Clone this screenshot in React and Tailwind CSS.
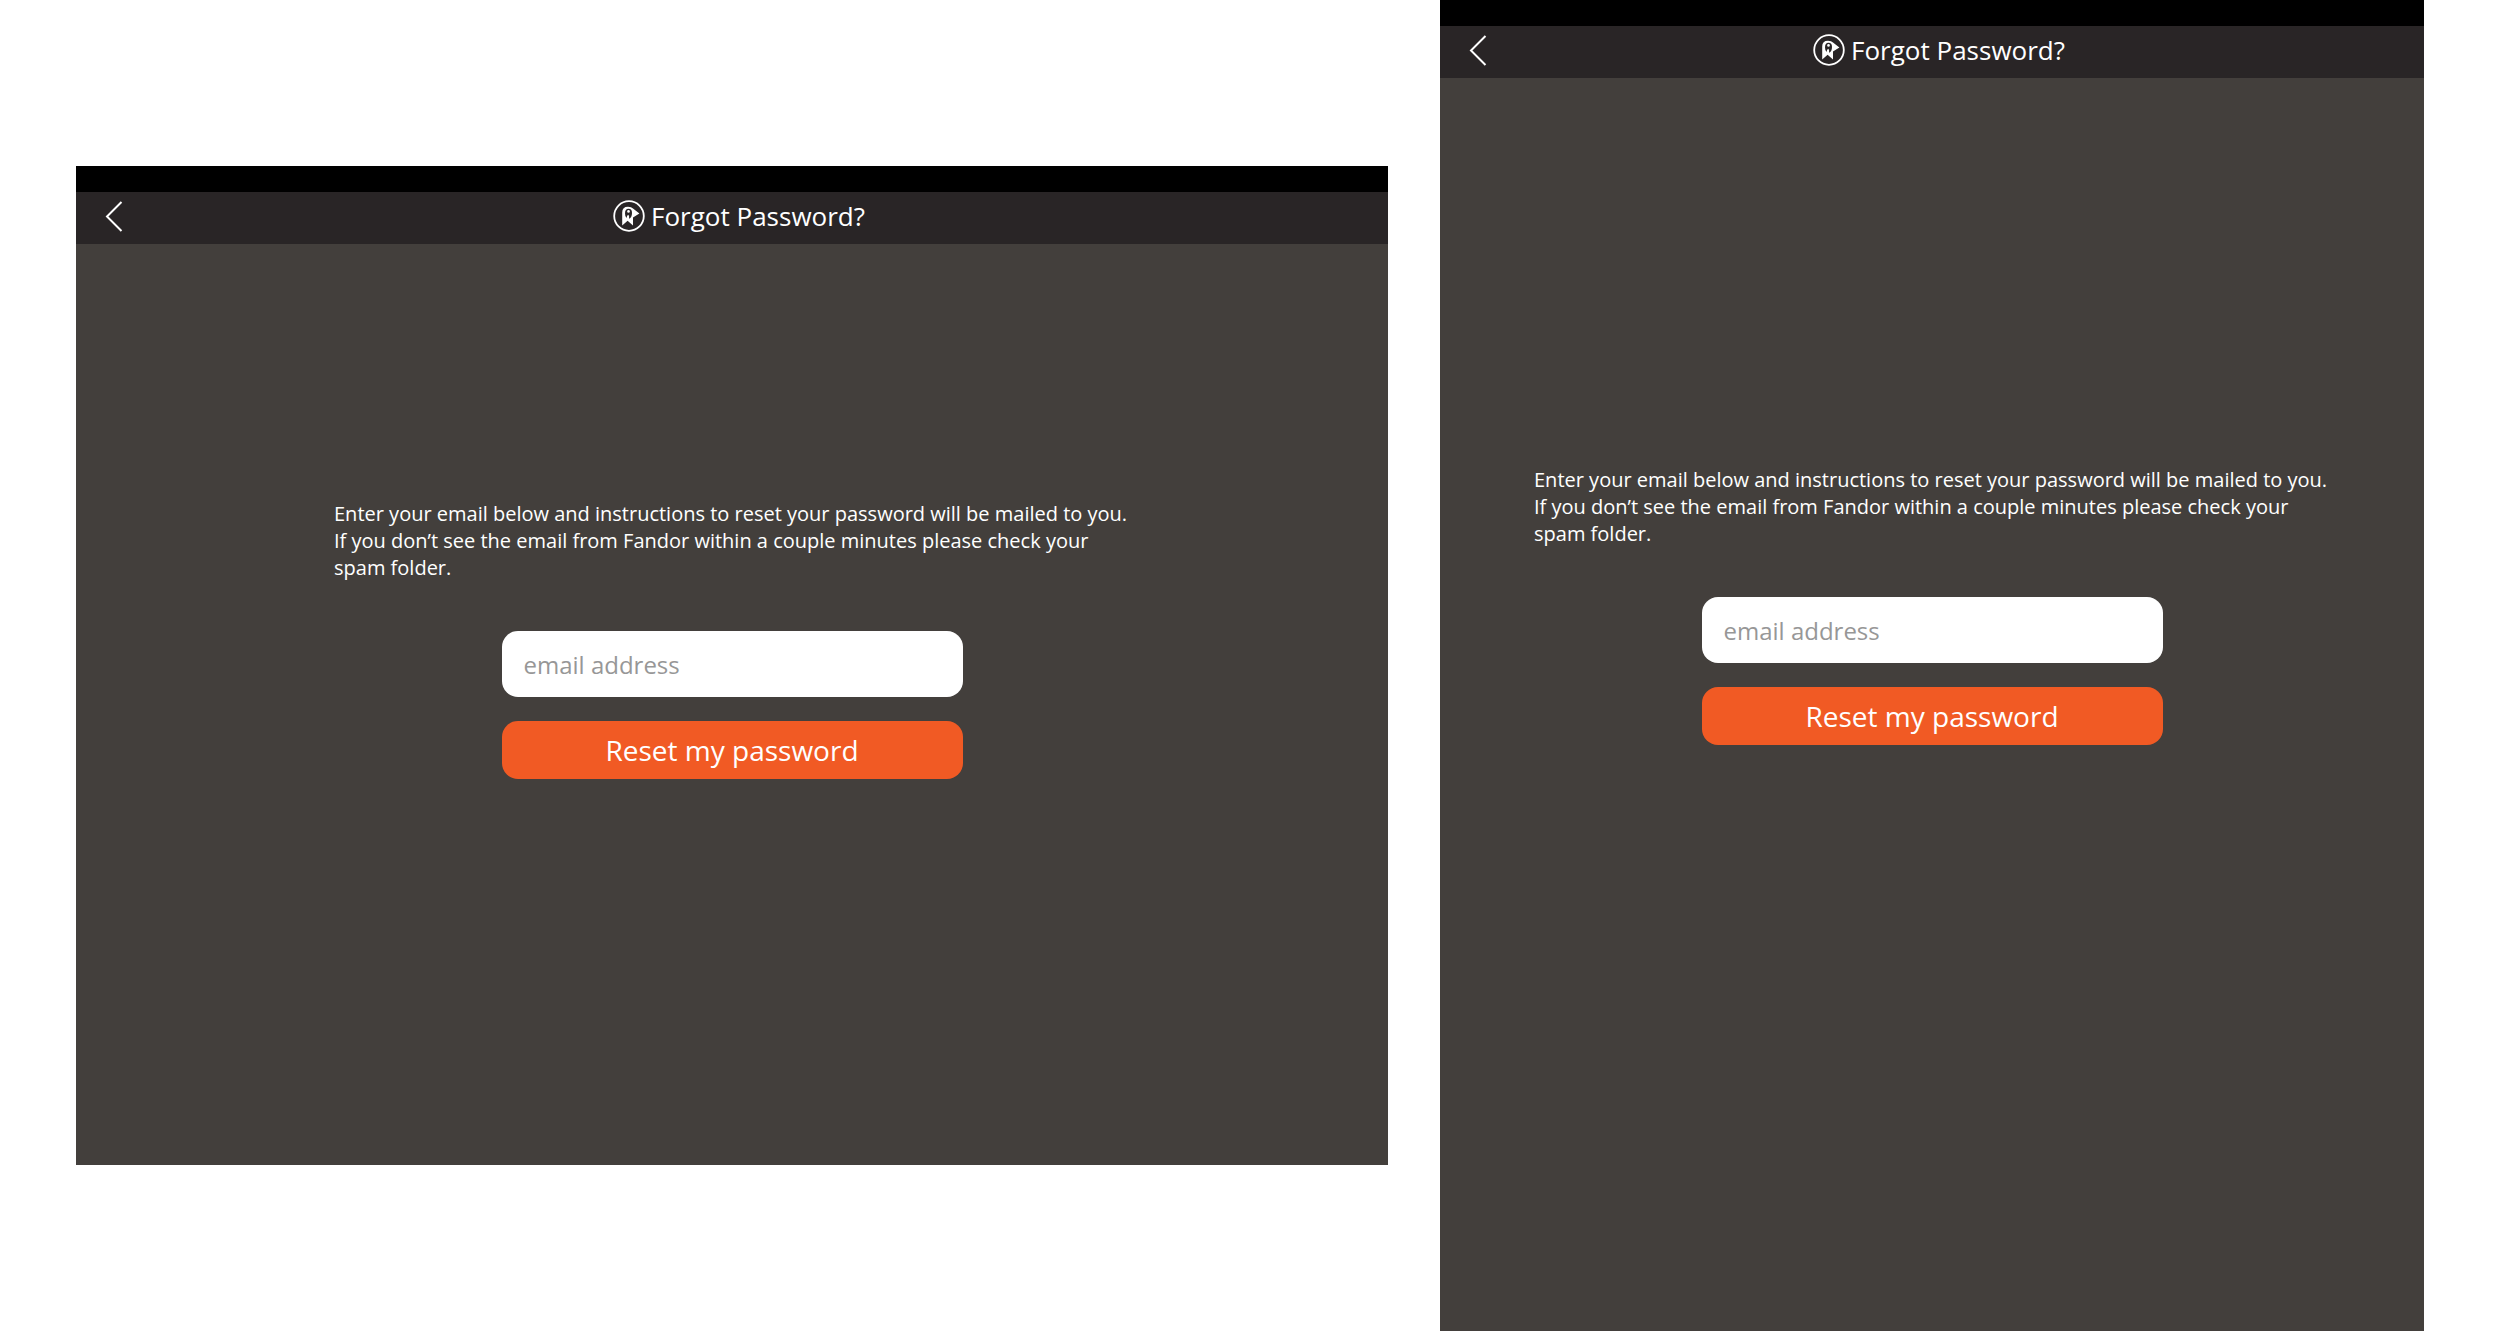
import React from 'react';

const FandorLogo = () => (
    <svg className="size-8 shrink-0" viewBox="0 0 32 32" fill="none" aria-hidden="true">
        <circle cx="16" cy="16" r="14.8" stroke="#fff" strokeWidth="1.8" />
        {/* ribbon head, beak and tails */}
        <path d="M9.2 25.5V12.6Q9.2 6.8 15 6.8Q18.5 6.8 20 8.4L26.4 13.6L20 17.6V25.5L14.6 20.8Z" fill="#fff" />
        <path d="M12 13.4Q12 8.8 15.5 8.8Q19 8.8 19 13Q19 17.4 16 18.8Q16.6 16.4 15.4 14.8Q13.8 15.4 13.6 18Q12 16.6 12 13.4Z" fill="#292526" />
        <circle cx="15.5" cy="11.4" r="1.3" fill="#fff" />
    </svg>
);

const NavBar = () => (
    <header>
        <div className="h-[26px] bg-black" />
        <div className="grid h-[52px] grid-cols-[1fr_auto_1fr] items-center bg-[#292526] pb-1 pl-[26px] pr-3">
            <button type="button" aria-label="Back" className="flex size-6 items-center justify-center">
                <svg className="h-8 w-5 shrink-0" viewBox="0 0 20 32" fill="none" aria-hidden="true">
                    <path d="M17.5 2L3 16.5L17.5 31" stroke="#fff" strokeWidth="2" />
                </svg>
            </button>
            <div className="flex items-center gap-1.5">
                <FandorLogo />
                <h1 className="text-[26px] leading-8 text-white">Forgot Password?</h1>
            </div>
        </div>
    </header>
);

const ResetForm = () => (
    <form className="mx-auto w-[796px] max-w-full" onSubmit={(e) => e.preventDefault()}>
        <p className="text-xl leading-[27px] text-white">
            Enter your email below and instructions to reset your password will be mailed to you.
            <br />
            If you don’t see the email from Fandor within a couple minutes please check your spam folder.
        </p>
        <div className="mx-auto mt-[50px] flex w-[461px] max-w-full flex-col gap-6">
            <input
                type="email"
                aria-label="email address"
                placeholder="email address"
                className="h-[66px] w-full rounded-2xl bg-white px-[22px] text-2xl text-gray-800 placeholder:text-[#979797]"
            />
            <button type="submit" className="h-[58px] w-full rounded-2xl bg-[#f15a24] text-[28px] leading-8 text-white">
                Reset my password
            </button>
        </div>
    </form>
);

export const App = () => (
    <div className="grid min-h-screen grid-cols-[4fr_3fr] gap-[52px] bg-white px-[76px] font-['Open_Sans',sans-serif]">
        {/* Landscape */}
        <section className="my-[166px] bg-[#433f3c]">
            <NavBar />
            <div className="pt-[256px]">
                <ResetForm />
            </div>
        </section>

        {/* Portrait */}
        <section className="bg-[#433f3c]">
            <NavBar />
            <div className="pt-[388px]">
                <ResetForm />
            </div>
        </section>
    </div>
);

export default App;
